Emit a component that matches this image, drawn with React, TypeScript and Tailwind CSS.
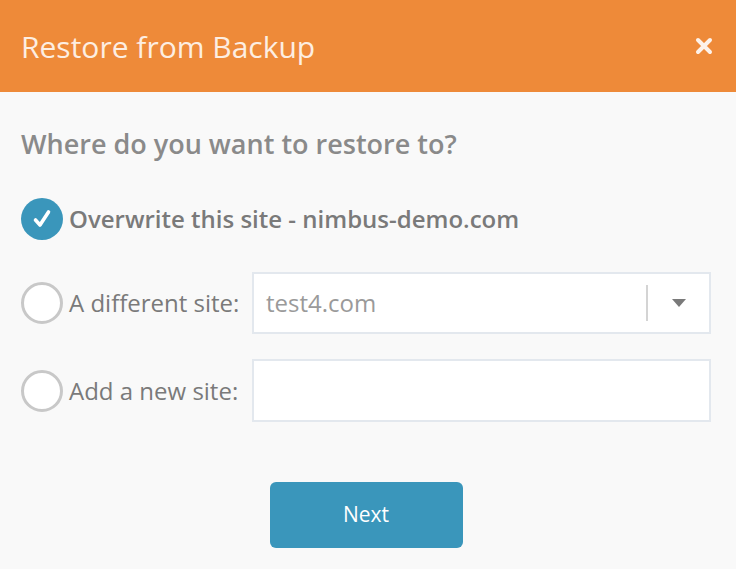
import { useState } from 'react';

type Choice = 'overwrite' | 'different' | 'new';

function Radio({ checked }: { checked: boolean }) {
  if (checked) {
    return (
      <span className="flex h-[42px] w-[42px] shrink-0 items-center justify-center rounded-full bg-[#3a96bb]">
        <svg width="20" height="20" viewBox="0 0 20 20">
          <path d="M3.5 11 L8 16 L16.5 3" fill="none" stroke="#fff" strokeWidth="3.6" strokeLinecap="round" strokeLinejoin="round" />
        </svg>
      </span>
    );
  }
  return <span className="h-[42px] w-[42px] shrink-0 rounded-full border-[3px] border-[#c8c8c8] bg-white" />;
}

export default function App() {
  const [choice, setChoice] = useState<Choice>('overwrite');

  return (
    <div className="flex h-[569px] w-[736px] flex-col bg-[#f9f9f9] font-['Open_Sans',sans-serif]">
      {/* header */}
      <div className="flex h-[92px] shrink-0 items-center justify-between bg-[#ee8a39] pl-[21px] pr-[23px]">
        <h1 className="text-[30px] font-normal text-[#fdeee2]">Restore from Backup</h1>
        <svg width="18" height="18" viewBox="0 0 18 18">
          <path d="M3 3 L15 15 M15 3 L3 15" stroke="#fdf2ea" strokeWidth="4" strokeLinecap="round" />
        </svg>
      </div>

      {/* body */}
      <div className="flex flex-col pl-[21px] pr-[25px] pt-[33px]">
        <h2 className="text-[27px] font-semibold leading-[38px] text-[#8a8a8a]">Where do you want to restore to?</h2>

        <button className="mt-[35px] flex items-center gap-[6px] text-left" onClick={() => setChoice('overwrite')}>
          <Radio checked={choice === 'overwrite'} />
          <span className="text-[24px] font-semibold text-[#7a7a7a]">Overwrite this site - nimbus-demo.com</span>
        </button>

        <div className="mt-[32px] flex items-center">
          <button className="flex items-center gap-[6px]" onClick={() => setChoice('different')}>
            <Radio checked={choice === 'different'} />
            <span className="text-[24px] text-[#7a7a7a]">A different site:</span>
          </button>
          <div className="ml-auto flex h-[62px] w-[459px] items-center border-2 border-[#e3e8ee] bg-white pl-[12px]">
            <span className="flex-1 text-[24px] text-[#9a9a9a]">test4.com</span>
            <span className="h-[36px] w-[2px] bg-[#d4d4d4]" />
            <span className="flex w-[61px] justify-center">
              <svg width="14" height="8" viewBox="0 0 14 8">
                <path d="M0 0 L14 0 L7 8 Z" fill="#7a7a7a" />
              </svg>
            </span>
          </div>
        </div>

        <div className="mt-[25px] flex items-center">
          <button className="flex items-center gap-[6px]" onClick={() => setChoice('new')}>
            <Radio checked={choice === 'new'} />
            <span className="text-[24px] text-[#7a7a7a]">Add a new site:</span>
          </button>
          <input className="ml-auto h-[63px] w-[459px] border-2 border-[#e3e8ee] bg-white px-[13px] text-[24px] text-[#7a7a7a] outline-none" />
        </div>

        <div className="mt-[60px] flex justify-center">
          <button className="h-[66px] w-[193px] rounded-[6px] bg-[#3a96bb] text-[21px] text-white">Next</button>
        </div>
      </div>
    </div>
  );
}
